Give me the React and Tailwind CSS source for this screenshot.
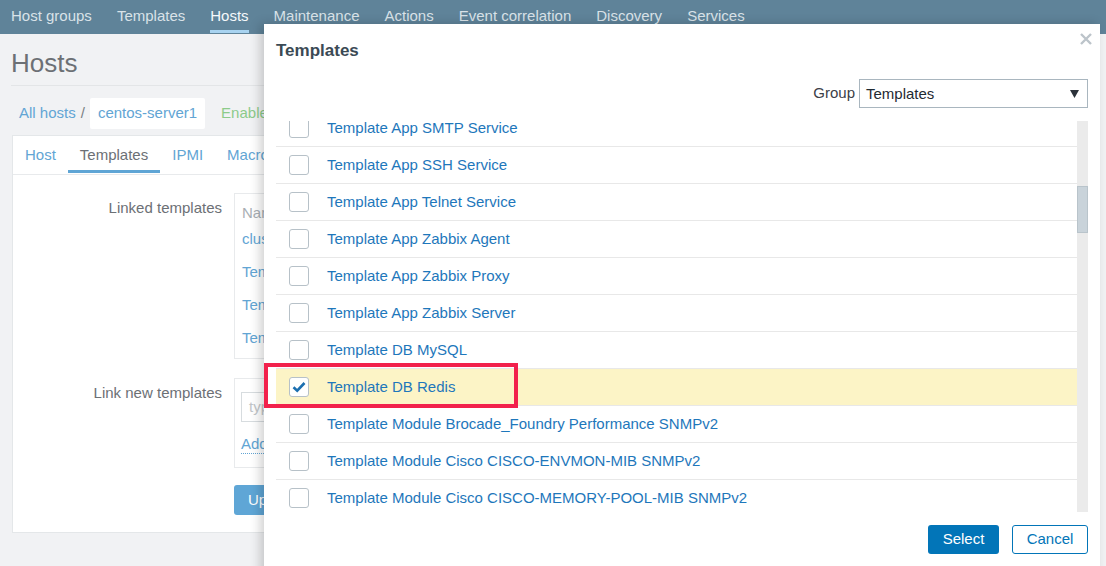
import React from "react";

const NAV = [
  "Host groups",
  "Templates",
  "Hosts",
  "Maintenance",
  "Actions",
  "Event correlation",
  "Discovery",
  "Services",
];

const TABS = ["Host", "Templates", "IPMI", "Macros"];

const TEMPLATES = [
  "Template App SMTP Service",
  "Template App SSH Service",
  "Template App Telnet Service",
  "Template App Zabbix Agent",
  "Template App Zabbix Proxy",
  "Template App Zabbix Server",
  "Template DB MySQL",
  "Template DB Redis",
  "Template Module Brocade_Foundry Performance SNMPv2",
  "Template Module Cisco CISCO-ENVMON-MIB SNMPv2",
  "Template Module Cisco CISCO-MEMORY-POOL-MIB SNMPv2",
  "Template Module Cisco CISCO-PROCESS-MIB SNMPv2",
];

const LINKED = ["cluster", "Template OS Linux", "Template App HTTP Service", "Template App FTP Service"];

function Checkbox({ checked }) {
  return (
    <span className="flex h-5 w-5 shrink-0 items-center justify-center rounded-[3px] border border-[#b7c1c8] bg-white">
      {checked && (
        <svg width="14" height="12" viewBox="0 0 14 12">
          <path d="M1.5 6.2 L5.2 9.6 L12.5 2" fill="none" stroke="#1b6fb0" strokeWidth="2.6" />
        </svg>
      )}
    </span>
  );
}

function TemplateRow({ name, checked }) {
  return (
    <div
      className={
        "flex h-[37px] items-center gap-[18px] border-b border-[#e8e8e8] pl-[13px] " +
        (checked ? "bg-[#fcf4c6]" : "bg-white")
      }
    >
      <Checkbox checked={checked} />
      <span className="text-[15px] text-[#1e77bb]">{name}</span>
    </div>
  );
}

export default function App() {
  return (
    <div className="relative h-[566px] w-[1106px] overflow-hidden bg-[#f1f2f4] font-['Liberation_Sans',Arial,sans-serif]">
      {/* top menu */}
      <div className="flex h-[34px] gap-[25px] bg-[#5f8399] pl-[11px]">
        {NAV.map((item) => (
          <div
            key={item}
            className={
              "flex flex-col justify-between pt-[6px] text-[15px] leading-[20px] " +
              (item === "Hosts" ? "text-[#f6f9fb]" : "text-[#d9e2e8]")
            }
          >
            <span>{item}</span>
            <span className={"h-[3px] w-full mb-[1px] " + (item === "Hosts" ? "bg-[#a8d3f0]" : "")} />
          </div>
        ))}
      </div>

      {/* page behind the dialog */}
      <div className="px-[11px]">
        <h1 className="border-b border-[#e3e5e7] pb-[7px] pt-[14px] text-[26px] leading-[30px] text-[#6c7075]">
          Hosts
        </h1>
        <div className="flex h-[49px] items-center pl-[8px] pt-[6px] text-[15px]">
          <span className="text-[#62a5d4]">All hosts</span>
          <span className="mx-[5px] text-[#7a7f84]">/</span>
          <span className="rounded-[2px] bg-white px-[8px] py-[4px] text-[#62a5d4]">centos-server1</span>
          <span className="ml-[16px] text-[#8ccb8a]">Enabled</span>
        </div>

        <div className="ml-[1px] h-[398px] border border-[#e4e7e9] bg-white">
          <div className="flex h-[39px] border-b border-[#e8eaec]">
            {TABS.map((t) => (
              <div
                key={t}
                className={
                  "flex flex-col justify-between px-3 pt-[9px] text-[15px] leading-[20px] " +
                  (t === "Templates" ? "text-[#6c7075]" : "text-[#62a5d4]")
                }
              >
                <span>{t}</span>
                <span className={"h-[3px] w-[calc(100%+24px)] -mx-3 mb-[1px] " + (t === "Templates" ? "bg-[#5fa5d5]" : "")} />
              </div>
            ))}
          </div>

          <div className="pt-[18px]">
            <div className="flex gap-[12px]">
              <div className="w-[209px] pt-[5px] text-right text-[15px] leading-[20px] text-[#6c7075]">Linked templates</div>
              <div className="w-[600px] border border-[#e8eaec] px-[7px] pb-[3px] pt-[10px]">
                <div className="h-[19px] text-[15px] leading-[18px] text-[#a9afb4]">Name</div>
                {LINKED.map((l) => (
                  <div key={l} className="flex h-[33px] items-center text-[15px] text-[#62a5d4]">
                    {l}
                  </div>
                ))}
              </div>
            </div>

            <div className="mt-[19px] flex gap-[12px]">
              <div className="w-[209px] pt-[5px] text-right text-[15px] leading-[20px] text-[#6c7075]">Link new templates</div>
              <div className="h-[90px] w-[600px] border border-[#e8eaec] px-[6px] pt-[13px]">
                <div className="flex h-[30px] w-[460px] items-center border border-[#d7dcdf] px-[7px] text-[15px] text-[#c2c6c9]">
                  type here to search
                </div>
                <div className="mt-[13px] inline-block border-b border-dotted border-[#62a5d4] text-[15px] leading-[18px] text-[#62a5d4]">
                  Add
                </div>
              </div>
            </div>

            <div className="ml-[221px] mt-[17px]">
              <button className="h-[30px] rounded-[3px] bg-[#5fa6d6] px-[14px] text-[15px] text-white">Update</button>
            </div>
          </div>
        </div>
      </div>

      {/* dialog */}
      <div className="absolute left-[264px] top-[24px] h-[560px] w-[836px] bg-white px-3 shadow-[-4px_0_10px_rgba(0,0,0,0.18)]">
        <button className="absolute right-[7px] top-[8px] p-[1px]">
          <svg width="12" height="12" viewBox="0 0 12 12">
            <path d="M1 1 L11 11 M11 1 L1 11" stroke="#bcc4ca" strokeWidth="2.4" />
          </svg>
        </button>

        <h2 className="pt-[17px] text-[17px] font-bold leading-[20px] text-[#3b4a55]">Templates</h2>

        <div className="mt-[18px] flex items-center justify-end gap-[4px]">
          <span className="text-[15px] text-[#3b4048]">Group</span>
          <div className="flex h-[29px] w-[229px] items-center justify-between border border-[#a9b6bf] pl-[6px] pr-[8px] pt-[1px]">
            <span className="text-[15px] text-[#1f2a33]">Templates</span>
            <svg width="9" height="8" viewBox="0 0 9 8">
              <path d="M0 0 H9 L4.5 8 Z" fill="#2b323a" />
            </svg>
          </div>
        </div>

        <div className="mt-[13px] flex h-[391px]">
          <div className="flex-1 overflow-hidden">
            <div className="-mt-[11px]">
              {TEMPLATES.map((t) => (
                <TemplateRow key={t} name={t} checked={t === "Template DB Redis"} />
              ))}
            </div>
          </div>
          <div className="w-[11px] bg-[#ebebeb] pt-[65px]">
            <div className="h-[47px] border border-[#b9c4cb] bg-[#c9d3da]" />
          </div>
        </div>

        <div className="mt-[13px] flex justify-end gap-[13px]">
          <button className="h-[29px] w-[71px] rounded-[3px] bg-[#0275b8] text-[15px] text-white">Select</button>
          <button className="h-[29px] w-[76px] rounded-[3px] border border-[#0275b8] bg-white text-[15px] text-[#0275b8]">
            Cancel
          </button>
        </div>

        {/* highlight annotation */}
        <div className="absolute left-0 top-[339px] h-[45px] w-[254px] border-[4px] border-[#f2214c]" />
      </div>
    </div>
  );
}
